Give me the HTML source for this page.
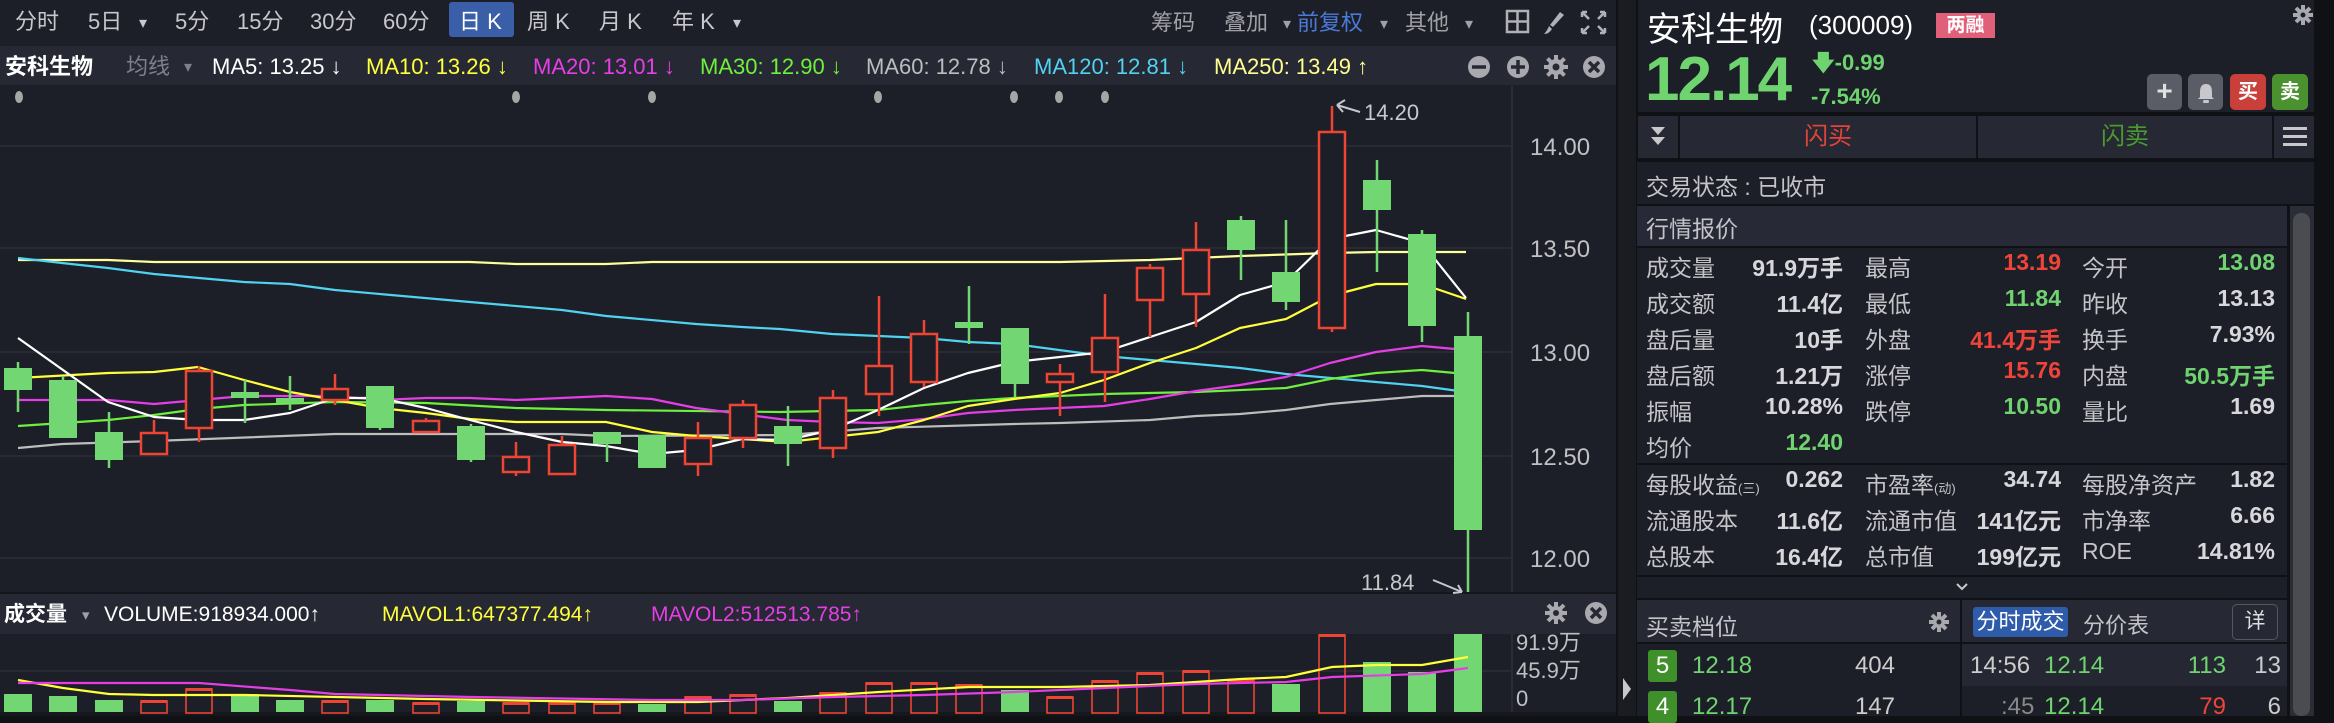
<!DOCTYPE html>
<html><head><meta charset="utf-8"><style>
*{margin:0;padding:0;box-sizing:border-box}
body{width:2334px;height:716px;background:#101115;overflow:hidden;position:relative;font-family:"Liberation Sans","Noto Sans CJK SC",sans-serif;color:#ccc}
.a{position:absolute;white-space:nowrap}
.r{text-align:right}
.lb{color:#c4c4c8;font-size:23px}
.v{color:#d8d8dc;font-size:23px;font-weight:bold}
.g{color:#6fd46f}.rd{color:#f0443a}
</style></head><body>
<svg class="a" style="left:0;top:0" width="1616" height="716" xmlns="http://www.w3.org/2000/svg" font-family="Liberation Sans, Noto Sans CJK SC, sans-serif">
<rect width="1616" height="716" fill="#1c1f27"/>
<rect y="46" width="1616" height="39" fill="#262934"/>
<rect y="592" width="1616" height="4" fill="#15171c"/>
<rect y="594" width="1616" height="40" fill="#262934"/>
<rect y="712" width="1616" height="4" fill="#15171c"/>
<g stroke="#272a33" stroke-width="2">
<line x1="0" y1="146" x2="1511" y2="146"/><line x1="0" y1="248" x2="1511" y2="248"/><line x1="0" y1="352" x2="1511" y2="352"/><line x1="0" y1="456" x2="1511" y2="456"/><line x1="0" y1="558" x2="1511" y2="558"/><line x1="0" y1="671" x2="1511" y2="671"/>
</g>
<line x1="1512" y1="86" x2="1512" y2="592" stroke="#2a2d36" stroke-width="2"/>
<line x1="1512" y1="634" x2="1512" y2="712" stroke="#2a2d36" stroke-width="2"/>
<g font-size="22" fill="#c8c8cc">
<text x="15" y="29">分时</text><text x="88" y="29">5日</text><text x="139" y="28" font-size="16">▾</text>
<text x="175" y="29">5分</text><text x="237" y="29">15分</text><text x="310" y="29">30分</text><text x="383" y="29">60分</text>
<rect x="449" y="2" width="65" height="35" rx="3" fill="#3a5fa8"/>
<text x="459" y="29" fill="#fff">日 K</text>
<text x="527" y="29">周 K</text><text x="599" y="29">月 K</text><text x="672" y="29">年 K</text><text x="733" y="28" font-size="16">▾</text>
<text x="1151" y="30" fill="#a0a0a6">筹码</text><text x="1224" y="30" fill="#a0a0a6">叠加</text><text x="1283" y="29" font-size="16" fill="#a0a0a6">▾</text>
<text x="1297" y="30" fill="#4a7ad8">前复权</text><text x="1380" y="29" font-size="16" fill="#a0a0a6">▾</text>
<text x="1405" y="30" fill="#a0a0a6">其他</text><text x="1465" y="29" font-size="16" fill="#a0a0a6">▾</text>
</g>
<g fill="none" stroke="#b0b0b6" stroke-width="2.5"><rect x="1507" y="11" width="21" height="21"/><line x1="1517.5" y1="11" x2="1517.5" y2="32"/><line x1="1507" y1="21.5" x2="1528" y2="21.5"/></g>
<path d="M1560 12 L1564 15 L1553 27 L1550 25 Z" fill="#b0b0b6"/><path d="M1549 26 L1552 29 Q1549 34 1544 34 Q1547 31 1549 26Z" fill="#b0b0b6"/>
<g stroke="#b0b0b6" stroke-width="2.5" fill="none"><path d="M1582 12 L1589 19 M1582 12 h5 M1582 12 v5"/><path d="M1605 12 L1598 19 M1605 12 h-5 M1605 12 v5"/><path d="M1582 33 L1589 26 M1582 33 h5 M1582 33 v-5"/><path d="M1605 33 L1598 26 M1605 33 h-5 M1605 33 v-5"/></g>
<g font-size="22">
<text x="5" y="74" fill="#fff" font-weight="bold">安科生物</text>
<text x="126" y="74" fill="#80808a">均线</text><text x="184" y="72" font-size="16" fill="#80808a">▾</text>
<text x="212" y="74" fill="#fff">MA5: 13.25 ↓</text>
<text x="366" y="74" fill="#ffff3c">MA10: 13.26 ↓</text>
<text x="533" y="74" fill="#e63ee6">MA20: 13.01 ↓</text>
<text x="700" y="74" fill="#6ef03c">MA30: 12.90 ↓</text>
<text x="866" y="74" fill="#bdbdbd">MA60: 12.78 ↓</text>
<text x="1034" y="74" fill="#50d2f0">MA120: 12.81 ↓</text>
<text x="1214" y="74" fill="#ffff90">MA250: 13.49 ↑</text>
</g>
<g fill="#a8a8ae"><circle cx="1479" cy="67" r="11"/><circle cx="1518" cy="67" r="11"/><circle cx="1594" cy="67" r="11"/>
<circle cx="1556" cy="67" r="8"/></g>
<g stroke="#a8a8ae" stroke-width="4"><line x1="1556" y1="55" x2="1556" y2="79"/><line x1="1544" y1="67" x2="1568" y2="67"/><line x1="1547.5" y1="58.5" x2="1564.5" y2="75.5"/><line x1="1564.5" y1="58.5" x2="1547.5" y2="75.5"/></g>
<circle cx="1556" cy="67" r="3.5" fill="#262934"/>
<g stroke="#262934" stroke-width="3.5"><line x1="1472" y1="67" x2="1486" y2="67"/><line x1="1511" y1="67" x2="1525" y2="67"/><line x1="1518" y1="60" x2="1518" y2="74"/><line x1="1589" y1="62" x2="1599" y2="72"/><line x1="1599" y1="62" x2="1589" y2="72"/></g>
<g fill="#a6a6a6"><ellipse cx="19" cy="97" rx="4" ry="6"/><ellipse cx="516" cy="97" rx="4" ry="6"/><ellipse cx="652" cy="97" rx="4" ry="6"/><ellipse cx="878" cy="97" rx="4" ry="6"/><ellipse cx="1014" cy="97" rx="4" ry="6"/><ellipse cx="1059" cy="97" rx="4" ry="6"/><ellipse cx="1105" cy="97" rx="4" ry="6"/></g>
<g font-size="24" fill="#c0c0c4"><text x="1530" y="155">14.00</text><text x="1530" y="257">13.50</text><text x="1530" y="361">13.00</text><text x="1530" y="465">12.50</text><text x="1530" y="567">12.00</text></g>
<g fill="none" stroke-width="2.2" stroke-linejoin="round">
<polyline stroke="#ffff99" points="18,260 108,260 154,262 470,262 516,264 606,264 652,262 1014,262 1060,262 1150,260 1240,256 1330,253 1376,252 1466,252"/>
<polyline stroke="#50d2f0" points="18,258 62,263 108,268 154,274 244,282 290,284 335,290 470,302 562,310 606,316 696,324 742,327 780,329 832,334 924,338 968,342 1014,344 1104,356 1196,364 1240,368 1286,374 1376,382 1422,386 1466,392"/>
<polyline stroke="#bdbdbd" points="18,448 62,444 154,441 335,434 562,434 606,436 787,435 878,428 1014,424 1060,423 1150,420 1196,416 1240,414 1286,410 1330,404 1376,400 1422,396 1466,396"/>
<polyline stroke="#6ef03c" points="18,426 108,420 154,415 198,409 244,405 335,402 426,403 516,408 606,410 780,412 878,410 924,405 968,401 1014,398 1104,394 1196,392 1286,388 1330,379 1376,373 1422,370 1466,374"/>
<polyline stroke="#e63ee6" points="18,400 108,400 154,404 244,396 335,396 380,400 426,398 470,398 516,400 606,396 652,399 696,408 787,420 832,422 878,423 924,419 968,413 1014,410 1104,406 1150,399 1196,391 1240,385 1286,377 1330,363 1376,352 1422,346 1466,350"/>
<polyline stroke="#ffff3c" points="18,378 108,373 154,372 198,367 244,380 290,392 335,400 380,408 426,413 470,419 516,422 606,422 652,432 696,436 787,442 832,437 878,432 924,420 968,406 1014,399 1060,393 1104,380 1150,363 1196,348 1240,328 1286,319 1330,296 1376,284 1422,284 1466,299"/>
<polyline stroke="#ffffff" points="18,338 108,402 154,417 198,420 244,420 290,413 335,398 380,398 426,408 470,420 516,432 562,442 606,446 652,454 696,450 742,439 787,440 832,430 878,410 924,388 968,373 1014,362 1060,357 1104,352 1150,337 1196,322 1240,295 1286,282 1330,239 1376,230 1422,243 1466,298"/>
</g>
<g stroke-width="2.5">
<g stroke="#72d672" fill="#72d672">
<line x1="18" y1="362" x2="18" y2="412"/><rect x="4" y="368" width="28" height="22" stroke="none"/>
<line x1="63" y1="376" x2="63" y2="438"/><rect x="49" y="380" width="28" height="58" stroke="none"/>
<line x1="109" y1="412" x2="109" y2="468"/><rect x="95" y="432" width="28" height="28" stroke="none"/>
<line x1="245" y1="380" x2="245" y2="423"/><rect x="231" y="392" width="28" height="6" stroke="none"/>
<line x1="290" y1="376" x2="290" y2="410"/><rect x="276" y="398" width="28" height="5" stroke="none"/>
<line x1="380" y1="386" x2="380" y2="430"/><rect x="366" y="386" width="28" height="42" stroke="none"/>
<line x1="471" y1="424" x2="471" y2="462"/><rect x="457" y="426" width="28" height="34" stroke="none"/>
<line x1="607" y1="432" x2="607" y2="462"/><rect x="593" y="432" width="28" height="12" stroke="none"/>
<rect x="638" y="435" width="28" height="33" stroke="none"/>
<line x1="788" y1="406" x2="788" y2="466"/><rect x="774" y="426" width="28" height="18" stroke="none"/>
<line x1="969" y1="286" x2="969" y2="344"/><rect x="955" y="322" width="28" height="6" stroke="none"/>
<line x1="1015" y1="328" x2="1015" y2="397"/><rect x="1001" y="328" width="28" height="56" stroke="none"/>
<line x1="1241" y1="216" x2="1241" y2="280"/><rect x="1227" y="220" width="28" height="30" stroke="none"/>
<line x1="1286" y1="220" x2="1286" y2="310"/><rect x="1272" y="272" width="28" height="30" stroke="none"/>
<line x1="1377" y1="160" x2="1377" y2="272"/><rect x="1363" y="180" width="28" height="30" stroke="none"/>
<line x1="1422" y1="230" x2="1422" y2="342"/><rect x="1408" y="234" width="28" height="92" stroke="none"/>
<line x1="1468" y1="312" x2="1468" y2="592"/><rect x="1454" y="336" width="28" height="194" stroke="none"/>
</g>
<g stroke="#ee4433" fill="#1c1f27">
<line x1="154" y1="420" x2="154" y2="454"/><rect x="141" y="433" width="26" height="21"/>
<line x1="199" y1="366" x2="199" y2="442"/><rect x="186" y="371" width="26" height="57"/>
<line x1="335" y1="374" x2="335" y2="405"/><rect x="322" y="389" width="26" height="11"/>
<line x1="426" y1="418" x2="426" y2="432"/><rect x="413" y="421" width="26" height="11"/>
<line x1="516" y1="442" x2="516" y2="476"/><rect x="503" y="457" width="26" height="15"/>
<line x1="562" y1="436" x2="562" y2="474"/><rect x="549" y="445" width="26" height="29"/>
<line x1="698" y1="422" x2="698" y2="476"/><rect x="685" y="438" width="26" height="26"/>
<line x1="743" y1="400" x2="743" y2="448"/><rect x="730" y="405" width="26" height="33"/>
<line x1="833" y1="390" x2="833" y2="458"/><rect x="820" y="398" width="26" height="50"/>
<line x1="879" y1="296" x2="879" y2="416"/><rect x="866" y="366" width="26" height="28"/>
<line x1="924" y1="320" x2="924" y2="387"/><rect x="911" y="334" width="26" height="48"/>
<line x1="1060" y1="364" x2="1060" y2="416"/><rect x="1047" y="374" width="26" height="8"/>
<line x1="1105" y1="294" x2="1105" y2="402"/><rect x="1092" y="338" width="26" height="34"/>
<line x1="1150" y1="264" x2="1150" y2="337"/><rect x="1137" y="268" width="26" height="32"/>
<line x1="1196" y1="222" x2="1196" y2="327"/><rect x="1183" y="250" width="26" height="44"/>
<line x1="1332" y1="106" x2="1332" y2="332"/><rect x="1319" y="132" width="26" height="196"/>
</g>
</g>
<g stroke="#c8c8cc" stroke-width="2" fill="none"><path d="M1360 112 L1337 105 M1337 105 l8 -5 M1337 105 l6 7"/><path d="M1433 580 L1462 592 M1462 592 l-9 1 M1462 592 l-4 -7"/></g>
<text x="1364" y="120" font-size="22" fill="#c8c8cc">14.20</text>
<text x="1361" y="590" font-size="22" fill="#c8c8cc">11.84</text>
<g font-size="21">
<text x="4" y="621" fill="#fff" font-weight="bold">成交量</text><text x="82" y="620" font-size="15" fill="#a0a0a6">▾</text>
<text x="104" y="621" fill="#fff">VOLUME:918934.000↑</text>
<text x="382" y="621" fill="#ffff3c">MAVOL1:647377.494↑</text>
<text x="651" y="621" fill="#e63ee6">MAVOL2:512513.785↑</text>
</g>
<circle cx="1556" cy="613" r="7" fill="#a8a8ae"/><g stroke="#a8a8ae" stroke-width="4"><line x1="1556" y1="602" x2="1556" y2="624"/><line x1="1545" y1="613" x2="1567" y2="613"/><line x1="1548" y1="605" x2="1564" y2="621"/><line x1="1564" y1="605" x2="1548" y2="621"/></g><circle cx="1556" cy="613" r="3" fill="#262934"/>
<circle cx="1596" cy="613" r="11" fill="#a8a8ae"/><g stroke="#262934" stroke-width="3.5"><line x1="1591" y1="608" x2="1601" y2="618"/><line x1="1601" y1="608" x2="1591" y2="618"/></g>
<g font-size="22" fill="#c0c0c4"><text x="1516" y="650">91.9万</text><text x="1516" y="678">45.9万</text><text x="1516" y="706">0</text></g>
<g fill="#72d672">
<rect x="4" y="694" width="28" height="18"/><rect x="49" y="696" width="28" height="16"/><rect x="95" y="700" width="28" height="12"/>
<rect x="231" y="694" width="28" height="18"/><rect x="276" y="700" width="28" height="12"/><rect x="366" y="700" width="28" height="12"/>
<rect x="457" y="701" width="28" height="11"/><rect x="638" y="704" width="28" height="8"/><rect x="774" y="701" width="28" height="11"/>
<rect x="1001" y="690" width="28" height="22"/><rect x="1272" y="684" width="28" height="28"/><rect x="1363" y="662" width="28" height="50"/>
<rect x="1408" y="672" width="28" height="40"/><rect x="1454" y="634" width="28" height="78"/>
</g>
<g fill="none" stroke="#ee4433" stroke-width="1.6">
<rect x="141" y="701" width="26" height="12"/><rect x="186" y="689" width="26" height="24"/><rect x="322" y="701" width="26" height="12"/>
<rect x="413" y="703" width="26" height="10"/><rect x="503" y="703" width="26" height="10"/><rect x="549" y="703" width="26" height="10"/>
<rect x="594" y="703" width="26" height="10"/><rect x="685" y="697" width="26" height="16"/><rect x="730" y="695" width="26" height="18"/>
<rect x="820" y="693" width="26" height="20"/><rect x="866" y="683" width="26" height="30"/><rect x="911" y="683" width="26" height="30"/>
<rect x="956" y="685" width="26" height="28"/><rect x="1047" y="697" width="26" height="16"/><rect x="1092" y="681" width="26" height="32"/>
<rect x="1137" y="673" width="26" height="40"/><rect x="1183" y="671" width="26" height="42"/><rect x="1228" y="680" width="26" height="33"/>
<rect x="1319" y="635" width="26" height="78"/>
</g>
<g fill="#ee4433"><rect x="141" y="700" width="26" height="3"/><rect x="186" y="688" width="26" height="3"/><rect x="322" y="700" width="26" height="3"/><rect x="413" y="702" width="26" height="3"/><rect x="503" y="702" width="26" height="3"/><rect x="549" y="702" width="26" height="3"/><rect x="594" y="702" width="26" height="3"/><rect x="685" y="696" width="26" height="3"/><rect x="730" y="694" width="26" height="3"/><rect x="820" y="692" width="26" height="3"/><rect x="866" y="682" width="26" height="3"/><rect x="911" y="682" width="26" height="3"/><rect x="956" y="684" width="26" height="3"/><rect x="1047" y="696" width="26" height="3"/><rect x="1092" y="680" width="26" height="3"/><rect x="1137" y="672" width="26" height="3"/><rect x="1183" y="670" width="26" height="3"/><rect x="1228" y="679" width="26" height="3"/><rect x="1319" y="634" width="26" height="3"/></g>
<g fill="none" stroke-width="2.2">
<polyline stroke="#ffff3c" points="18,680 63,688 109,694 154,695 245,695 426,699 607,702 698,702 788,698 879,692 969,687 1060,687 1150,685 1241,679 1286,677 1332,667 1377,665 1422,665 1468,657"/>
<polyline stroke="#e63ee6" points="18,683 199,683 290,690 335,694 471,697 652,700 743,700 833,697 924,695 1015,692 1105,688 1196,684 1286,682 1332,677 1422,674 1468,668"/>
</g>
</svg>
<div class="a" style="left:1618px;top:0;width:18px;height:716px;background:#1a1c21"></div>
<div class="a" style="left:1623px;top:678px;width:0;height:0;border-top:11px solid transparent;border-bottom:11px solid transparent;border-left:8px solid #c8c8cc"></div>
<div class="a" style="left:1638px;top:0;width:676px;height:112px;background:#1c1f27"></div>
<div class="a" style="left:1647px;top:2px;font-size:34px;color:#fff">安科生物</div>
<div class="a" style="left:1809px;top:10px;font-size:26px;color:#fff">(300009)</div>
<div class="a" style="left:1936px;top:13px;width:59px;height:25px;background:#e0607a;color:#fff;font-size:19px;font-weight:bold;text-align:center;line-height:25px">两融</div>
<svg class="a" style="left:2292px;top:4px" width="22" height="22"><circle cx="11" cy="11" r="6" fill="#a8a8ae"/><g stroke="#a8a8ae" stroke-width="4"><line x1="11" y1="1" x2="11" y2="21"/><line x1="1" y1="11" x2="21" y2="11"/><line x1="4" y1="4" x2="18" y2="18"/><line x1="18" y1="4" x2="4" y2="18"/></g><circle cx="11" cy="11" r="2.5" fill="#1c1f27"/></svg>
<div class="a g" style="left:1645px;top:44px;font-size:62px;font-weight:bold;letter-spacing:-2px">12.14</div>
<div class="a g" style="left:1812px;top:46px;font-size:22px;font-weight:bold">🡇-0.99</div>
<div class="a g" style="left:1811px;top:84px;font-size:22px;font-weight:bold">-7.54%</div>
<div class="a" style="left:2147px;top:74px;width:35px;height:36px;border-radius:5px;background:#5a5d66;color:#e0e0e0;font-size:28px;font-weight:bold;text-align:center;line-height:34px">+</div>
<div class="a" style="left:2188px;top:74px;width:35px;height:36px;border-radius:5px;background:#5a5d66"></div>
<svg class="a" style="left:2196px;top:82px" width="20" height="22"><path d="M10 2 Q4 2 4 10 V15 L2 17 H18 L16 15 V10 Q16 2 10 2Z" fill="#c8c8cc"/><rect x="7" y="18" width="6" height="3" rx="1.5" fill="#c8c8cc"/></svg>
<div class="a" style="left:2230px;top:74px;width:36px;height:36px;border-radius:5px;background:#c9403a;color:#fff;font-size:20px;font-weight:bold;text-align:center;line-height:36px">买</div>
<div class="a" style="left:2272px;top:74px;width:36px;height:36px;border-radius:5px;background:#4a9230;color:#fff;font-size:20px;font-weight:bold;text-align:center;line-height:36px">卖</div>
<div class="a" style="left:1638px;top:116px;width:40px;height:42px;background:#262833"></div>
<div class="a" style="left:1651px;top:127px;border-left:7px solid transparent;border-right:7px solid transparent;border-top:8px solid #c8c8cc"></div>
<div class="a" style="left:1651px;top:137px;border-left:7px solid transparent;border-right:7px solid transparent;border-top:8px solid #c8c8cc"></div>
<div class="a" style="left:1680px;top:116px;width:296px;height:42px;background:#262833;color:#e0443a;font-size:24px;text-align:center;line-height:42px">闪买</div>
<div class="a" style="left:1978px;top:116px;width:294px;height:42px;background:#262833;color:#4a9a30;font-size:24px;text-align:center;line-height:42px">闪卖</div>
<div class="a" style="left:2274px;top:116px;width:40px;height:42px;background:#262833"></div>
<div class="a" style="left:2283px;top:127px;width:24px;height:3px;background:#c8c8cc;box-shadow:0 8px 0 #c8c8cc,0 16px 0 #c8c8cc"></div>
<div class="a" style="left:1637px;top:162px;width:677px;height:42px;background:#1c1f27"></div>
<div class="a lb" style="left:1646px;top:168px">交易状态 : 已收市</div>
<div class="a" style="left:1637px;top:206px;width:650px;height:40px;background:#272a36"></div>
<div class="a lb" style="left:1646px;top:210px">行情报价</div>
<div class="a" style="left:1637px;top:248px;width:650px;height:215px;background:#1c1f27"></div>
<div class="a" style="left:1637px;top:465px;width:650px;height:110px;background:#1c1f27"></div>
<div class="a" style="left:1637px;top:577px;width:650px;height:21px;background:#1c1f27"></div>
<svg class="a" style="left:1955px;top:582px" width="14" height="10"><polyline points="2,2 7,7 12,2" fill="none" stroke="#c8c8cc" stroke-width="2"/></svg>
<div class="a" style="left:2290px;top:206px;width:24px;height:510px;background:#2a2d35"></div>
<div class="a" style="left:2293px;top:213px;width:17px;height:503px;background:#4a4c52;border-radius:8px"></div>
<div class="a lb" style="left:1646px;top:249px">成交量</div><div class="a v r" style="right:491px;top:249px">91.9万手</div>
<div class="a lb" style="left:1865px;top:249px">最高</div><div class="a v r rd" style="right:273px;top:249px">13.19</div>
<div class="a lb" style="left:2082px;top:249px">今开</div><div class="a v r g" style="right:59px;top:249px">13.08</div>
<div class="a lb" style="left:1646px;top:285px">成交额</div><div class="a v r" style="right:491px;top:285px">11.4亿</div>
<div class="a lb" style="left:1865px;top:285px">最低</div><div class="a v r g" style="right:273px;top:285px">11.84</div>
<div class="a lb" style="left:2082px;top:285px">昨收</div><div class="a v r" style="right:59px;top:285px">13.13</div>
<div class="a lb" style="left:1646px;top:321px">盘后量</div><div class="a v r" style="right:491px;top:321px">10手</div>
<div class="a lb" style="left:1865px;top:321px">外盘</div><div class="a v r rd" style="right:273px;top:321px">41.4万手</div>
<div class="a lb" style="left:2082px;top:321px">换手</div><div class="a v r" style="right:59px;top:321px">7.93%</div>
<div class="a lb" style="left:1646px;top:357px">盘后额</div><div class="a v r" style="right:491px;top:357px">1.21万</div>
<div class="a lb" style="left:1865px;top:357px">涨停</div><div class="a v r rd" style="right:273px;top:357px">15.76</div>
<div class="a lb" style="left:2082px;top:357px">内盘</div><div class="a v r g" style="right:59px;top:357px">50.5万手</div>
<div class="a lb" style="left:1646px;top:393px">振幅</div><div class="a v r" style="right:491px;top:393px">10.28%</div>
<div class="a lb" style="left:1865px;top:393px">跌停</div><div class="a v r g" style="right:273px;top:393px">10.50</div>
<div class="a lb" style="left:2082px;top:393px">量比</div><div class="a v r" style="right:59px;top:393px">1.69</div>
<div class="a lb" style="left:1646px;top:429px">均价</div><div class="a v r g" style="right:491px;top:429px">12.40</div>
<div class="a lb" style="left:1646px;top:466px">每股收益<span style="font-size:13px">(三)</span></div><div class="a v r" style="right:491px;top:466px">0.262</div>
<div class="a lb" style="left:1865px;top:466px">市盈率<span style="font-size:13px">(动)</span></div><div class="a v r" style="right:273px;top:466px">34.74</div>
<div class="a lb" style="left:2082px;top:466px">每股净资产</div><div class="a v r" style="right:59px;top:466px">1.82</div>
<div class="a lb" style="left:1646px;top:502px">流通股本</div><div class="a v r" style="right:491px;top:502px">11.6亿</div>
<div class="a lb" style="left:1865px;top:502px">流通市值</div><div class="a v r" style="right:273px;top:502px">141亿元</div>
<div class="a lb" style="left:2082px;top:502px">市净率</div><div class="a v r" style="right:59px;top:502px">6.66</div>
<div class="a lb" style="left:1646px;top:538px">总股本</div><div class="a v r" style="right:491px;top:538px">16.4亿</div>
<div class="a lb" style="left:1865px;top:538px">总市值</div><div class="a v r" style="right:273px;top:538px">199亿元</div>
<div class="a lb" style="left:2082px;top:538px">ROE</div><div class="a v r" style="right:59px;top:538px">14.81%</div>
<div class="a" style="left:1637px;top:600px;width:323px;height:42px;background:#262833"></div>
<div class="a lb" style="left:1646px;top:608px">买卖档位</div>
<svg class="a" style="left:1928px;top:611px" width="22" height="22"><circle cx="11" cy="11" r="6" fill="#a8a8ae"/><g stroke="#a8a8ae" stroke-width="4"><line x1="11" y1="1" x2="11" y2="21"/><line x1="1" y1="11" x2="21" y2="11"/><line x1="4" y1="4" x2="18" y2="18"/><line x1="18" y1="4" x2="4" y2="18"/></g><circle cx="11" cy="11" r="2.5" fill="#262833"/></svg>
<div class="a" style="left:1962px;top:600px;width:325px;height:42px;background:#262833"></div>
<div class="a" style="left:1973px;top:607px;width:95px;height:30px;background:#2f5bab;border-radius:3px;color:#fff;font-size:22px;text-align:center;line-height:30px">分时成交</div>
<div class="a lb" style="left:2083px;top:608px;font-size:22px">分价表</div>
<div class="a" style="left:2232px;top:604px;width:46px;height:36px;border:1px solid #55575e;border-radius:5px;color:#ddd;font-size:21px;text-align:center;line-height:34px">详</div>
<div class="a" style="left:1637px;top:644px;width:323px;height:72px;background:#1c1f27"></div>
<div class="a" style="left:1962px;top:644px;width:325px;height:72px;background:#1c1f27"></div>
<div class="a" style="left:1962px;top:644px;width:325px;height:42px;background:#252833"></div>
<div class="a" style="left:1648px;top:650px;width:29px;height:32px;background:#3f8f2a;border-radius:3px;color:#fff;font-size:24px;text-align:center;line-height:32px">5</div>
<div class="a g" style="left:1692px;top:652px;font-size:24px">12.18</div>
<div class="a r" style="right:439px;top:652px;font-size:24px;color:#ccc">404</div>
<div class="a" style="left:1648px;top:691px;width:29px;height:32px;background:#3f8f2a;border-radius:3px;color:#fff;font-size:24px;text-align:center;line-height:32px">4</div>
<div class="a g" style="left:1692px;top:693px;font-size:24px">12.17</div>
<div class="a r" style="right:439px;top:693px;font-size:24px;color:#ccc">147</div>
<div class="a" style="left:1970px;top:652px;font-size:24px;color:#ccc">14:56</div>
<div class="a g" style="left:2044px;top:652px;font-size:24px">12.14</div>
<div class="a r g" style="right:108px;top:652px;font-size:24px">113</div>
<div class="a r" style="right:53px;top:652px;font-size:24px;color:#ccc">13</div>
<div class="a" style="left:2001px;top:693px;font-size:24px;color:#888">:45</div>
<div class="a g" style="left:2044px;top:693px;font-size:24px">12.14</div>
<div class="a r rd" style="right:108px;top:693px;font-size:24px">79</div>
<div class="a r" style="right:53px;top:693px;font-size:24px;color:#ccc">6</div>
</body></html>
